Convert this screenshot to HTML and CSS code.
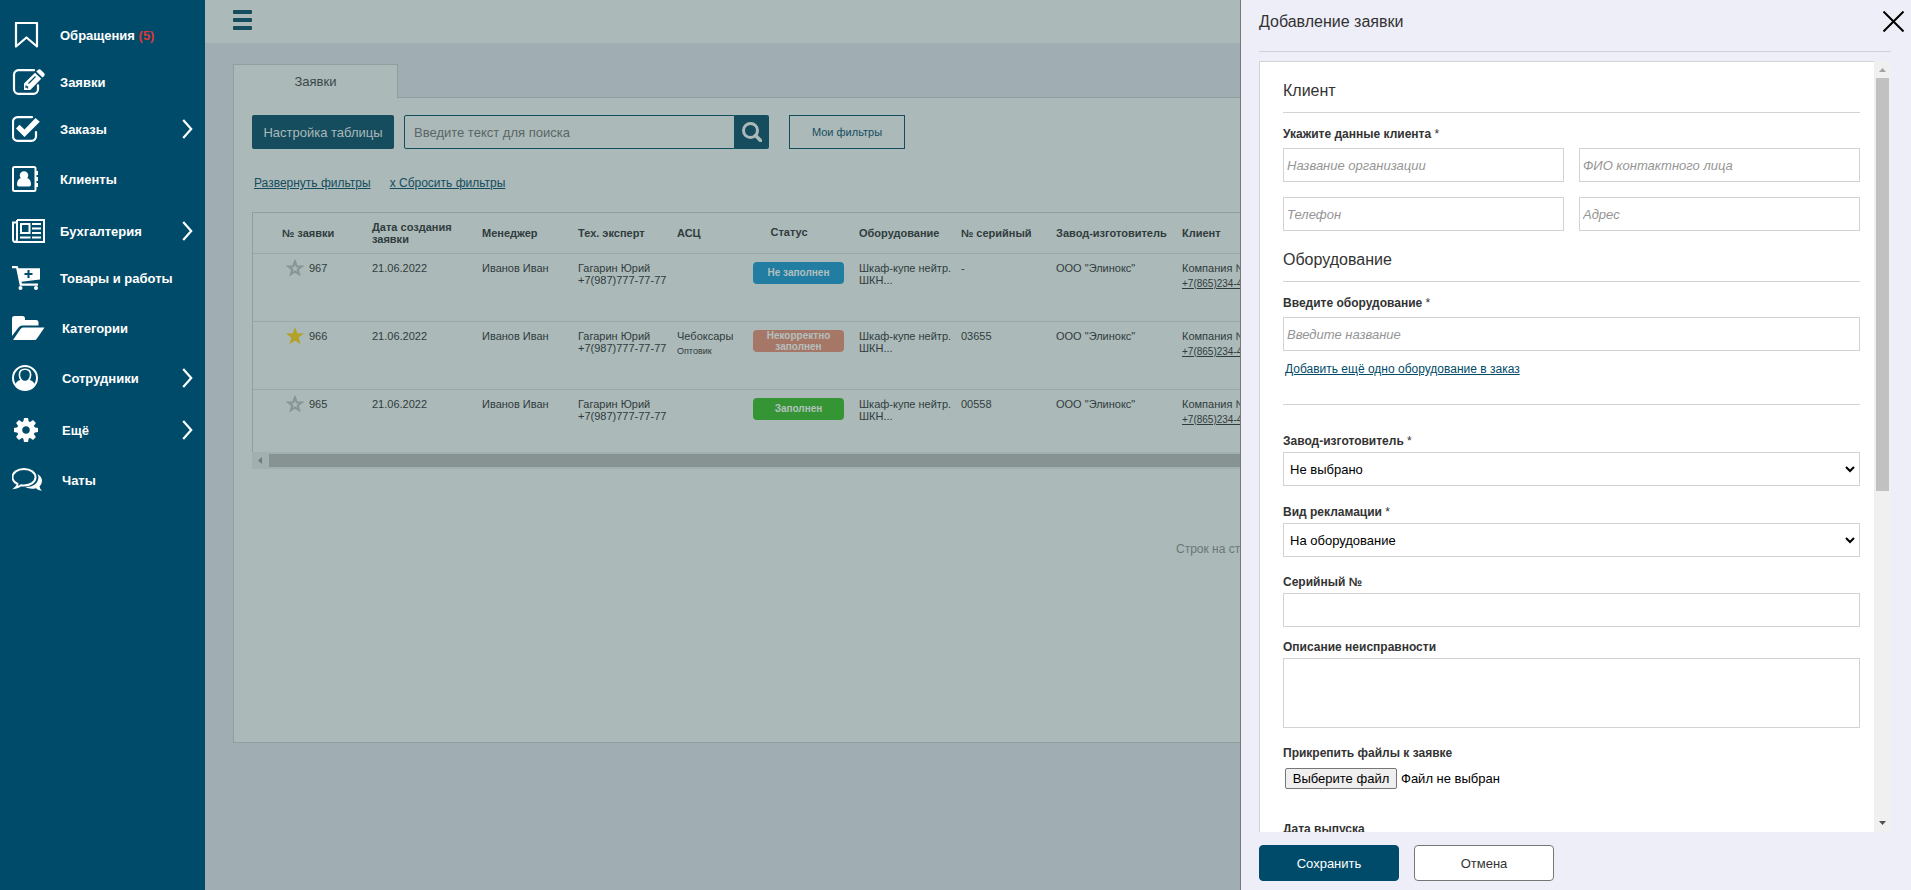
FILE: index.html
```html
<!DOCTYPE html>
<html lang="ru">
<head>
<meta charset="utf-8">
<title>Заявки</title>
<link rel="stylesheet" href="styles.css">
</head>
<body>
<div class="app">
  <nav class="sidebar">
    <a class="nav-item" href="#"><span class="nav-icon"><svg width="32" height="26" viewBox="0 0 32 26"><path d="M4 1h21v23.500L14.500 15.500 4 24.500z" fill="none" stroke="#fff" stroke-width="2.200" stroke-linejoin="round"/></svg></span>Обращения&nbsp;<span class="count">(5)</span></a>
    <a class="nav-item nav-item--tight" href="#"><span class="nav-icon"><svg width="34" height="26" viewBox="0 0 34 26"><path d="M22 1.200H6.500A4.500 4.500 0 0 0 2 5.700v14.600A4.500 4.500 0 0 0 6.500 24.800h15A4.500 4.500 0 0 0 26 20.300v-4" fill="none" stroke="#fff" stroke-width="2.200" stroke-linecap="round"/><path d="M12 21v-6.500L23 3.800l6.200 6L18.300 21zM24.300 2.500l1.800-1.700q1.300-1 2.600 0l3.500 3.500q1 1.300 0 2.600l-1.700 1.700z" fill="#fff"/><path d="M14 16.500v1.500h1.500v1.500M16.500 14.500l7-7" fill="none" stroke="#004b69" stroke-width="1.300"/></svg></span>Заявки</a>
    <a class="nav-item nav-item--tight" href="#"><span class="nav-icon"><svg width="32" height="26" viewBox="0 0 32 26"><path d="M20 1.200H5.500A4.500 4.500 0 0 0 1 5.700v14.600A4.500 4.500 0 0 0 5.500 24.800h14A4.500 4.500 0 0 0 24 20.300V16" fill="none" stroke="#fff" stroke-width="2.200" stroke-linecap="round"/><path d="M4 12.500l3.500-3.700 5 4.700L23.500 2l4.300 3.800L12.500 21z" fill="#fff"/></svg></span>Заказы<svg class="chevron" width="11" height="20" viewBox="0 0 11 20"><path d="M1.200 1l8 9-8 9" fill="none" stroke="#fff" stroke-width="2.200"/></svg></a>
    <a class="nav-item" href="#"><span class="nav-icon"><svg width="32" height="26" viewBox="0 0 32 26"><rect x="1" y="1" width="22.500" height="24" rx="1.500" fill="none" stroke="#fff" stroke-width="2"/><circle cx="12" cy="9.500" r="4.200" fill="#fff"/><path d="M5 18.500q0-5.500 4-6.500 3 2.500 6 0 4 1 4 6.500 0 2-2 2H7q-2 0-2-2zM24 5h2v4h-2zM24 11h2v4h-2zM24 17h2v4h-2z" fill="#fff"/></svg></span>Клиенты</a>
    <a class="nav-item nav-item--loose" href="#"><span class="nav-icon"><svg width="34" height="24" viewBox="0 0 34 24"><path d="M5 1h27v22H3Q1 23 1 20V3.500h3.500M5 1v19q0 3-2 3" fill="none" stroke="#fff" stroke-width="2"/><rect x="9" y="5" width="8.500" height="9" fill="none" stroke="#fff" stroke-width="2"/><path d="M20 5h9M20 9.500h9M20 14h9M8 18.500h10.500M20 18.500h9" stroke="#fff" stroke-width="2"/></svg></span>Бухгалтерия<svg class="chevron" width="11" height="20" viewBox="0 0 11 20"><path d="M1.200 1l8 9-8 9" fill="none" stroke="#fff" stroke-width="2.200"/></svg></a>
    <a class="nav-item nav-item--tight" href="#"><span class="nav-icon"><svg width="32" height="24" viewBox="0 0 32 24"><path d="M0 0h5.500l1 2.300H28V13.500L9.500 15.800l.4 1.700H26v2.200H7.800L4.200 2.300H0z" fill="#fff"/><circle cx="8.500" cy="22" r="2" fill="#fff"/><circle cx="24" cy="22" r="2" fill="#fff"/><path d="M16.500 4v8M12.500 8h8" stroke="#004b69" stroke-width="2"/></svg></span>Товары и работы</a>
    <a class="nav-item nav-item--wide" href="#"><span class="nav-icon"><svg width="34" height="24" viewBox="0 0 34 24"><path d="M0 20V2.500Q0 0 2.500 0h8Q13 0 13 2.500V4h11q2.500 0 2.500 2.500V9.500H10.500Q8 9.500 6.500 11.500z" fill="#fff"/><path d="M1 24l7.500-11Q9.500 11.500 11 11.500h21.500l-7.500 11Q24 24 22 24z" fill="#fff"/></svg></span>Категории</a>
    <a class="nav-item nav-item--wide" href="#"><span class="nav-icon"><svg width="32" height="26" viewBox="0 0 32 26"><circle cx="13" cy="13" r="12" fill="none" stroke="#fff" stroke-width="2"/><path d="M3 20q1-4 6-5.200 4 2.600 8 0 5 1.200 6 5.200-4 5-10 5T3 20z" fill="#fff"/><path d="M13 4.200c3.600 0 5.600 2.200 5.600 5.600 0 4-2.600 6.800-5.600 6.800s-5.600-2.800-5.600-6.800c0-3.400 2-5.600 5.600-5.600z" fill="#004b69" stroke="#fff" stroke-width="1.600"/></svg></span>Сотрудники<svg class="chevron" width="11" height="20" viewBox="0 0 11 20"><path d="M1.200 1l8 9-8 9" fill="none" stroke="#fff" stroke-width="2.200"/></svg></a>
    <a class="nav-item nav-item--wide nav-item--loose" href="#"><span class="nav-icon"><svg width="32" height="24" viewBox="-14 -12 32 24"><circle r="6.400" fill="none" stroke="#fff" stroke-width="5.200"/><g fill="#fff"><path id="tooth" d="M-2.800-8l.8-4h4l.8 4z"/><use href="#tooth" transform="rotate(45)"/><use href="#tooth" transform="rotate(90)"/><use href="#tooth" transform="rotate(135)"/><use href="#tooth" transform="rotate(180)"/><use href="#tooth" transform="rotate(225)"/><use href="#tooth" transform="rotate(270)"/><use href="#tooth" transform="rotate(315)"/></g></svg></span>Ещё<svg class="chevron" width="11" height="20" viewBox="0 0 11 20"><path d="M1.200 1l8 9-8 9" fill="none" stroke="#fff" stroke-width="2.200"/></svg></a>
    <a class="nav-item nav-item--wide" href="#"><span class="nav-icon"><svg width="32" height="24" viewBox="0 0 32 24"><path d="M25.500 6q4.500 2.500 4.500 7 0 3-2.500 5.500.3 2.500 2.500 4-3.500.5-6-2.200-6 1.500-11-1.300Q26 19 26.500 9z" fill="#fff"/><path d="M12 1c6.500 0 11.500 3.600 11.500 8.300S18.500 17.500 12 17.500q-1.500 0-3-.2-2.500 2-5.500 2.500 2-1.800 2-3.800Q.5 13.500.500 9.300C.5 4.600 5.500 1 12 1z" fill="#004b69" stroke="#fff" stroke-width="2"/></svg></span>Чаты</a>
  </nav>

  <main class="main">
    <header class="topbar">
      <button class="burger" type="button" aria-label="Меню"><span></span><span></span><span></span></button>
    </header>
    <section class="content">
      <div class="tab">Заявки</div>
      <div class="card">
        <div class="toolbar">
          <button class="btn-settings" type="button">Настройка таблицы</button>
          <div class="search">
            <input class="search-input" type="text" placeholder="Введите текст для поиска" aria-label="Поиск">
            <button class="search-btn" type="button" aria-label="Найти"><svg width="20" height="20" viewBox="0 0 20 20"><circle cx="8.500" cy="8.500" r="7" fill="none" stroke="#abb9b8" stroke-width="3"/><path d="M13.500 13.500l5 5" stroke="#abb9b8" stroke-width="3.500" stroke-linecap="round"/></svg></button>
          </div>
          <button class="btn-filters" type="button">Мои фильтры</button>
        </div>
        <div class="filter-links"><a href="#">Развернуть фильтры</a><a href="#">х Сбросить фильтры</a></div>
        <div class="table-wrap">
          <table class="orders">
            <colgroup><col class="c-num"><col class="c-date"><col class="c-manager"><col class="c-expert"><col class="c-asc"><col class="c-status"><col class="c-equip"><col class="c-serial"><col class="c-factory"><col></colgroup>
            <thead>
              <tr><th>№ заявки</th><th>Дата создания<br>заявки</th><th>Менеджер</th><th>Тех. эксперт</th><th>АСЦ</th><th class="th-status">Статус</th><th>Оборудование</th><th>№ серийный</th><th>Завод-изготовитель</th><th>Клиент</th></tr>
            </thead>
            <tbody>
              <tr>
                <td><span class="num"><svg width="18" height="18" viewBox="0 0 18 18"><path d="M9 2.500l1.700 4.700 5 .2-4 3 1.400 4.800L9 12.400l-4.100 2.800 1.400-4.800-4-3 5-.2z" fill="none" stroke="#879594" stroke-width="2"/></svg>967</span></td>
                <td>21.06.2022</td><td>Иванов Иван</td><td>Гагарин Юрий<br>+7(987)777-77-77</td><td></td>
                <td><span class="badge badge--blue">Не заполнен</span></td>
                <td>Шкаф-купе нейтр.<br>ШКН...</td><td>-</td><td>ООО "Элинокс"</td><td>Компания №1<a class="phone" href="#">+7(865)234-44-44</a></td>
              </tr>
              <tr>
                <td><span class="num"><svg width="18" height="18" viewBox="0 0 18 18"><path d="M9 0l2.200 6.300 6.800.2-5.400 4.100 1.900 6.600L9 13.400l-5.500 3.800 1.900-6.600L0 6.500l6.800-.2z" fill="#b3a128"/></svg>966</span></td>
                <td>21.06.2022</td><td>Иванов Иван</td><td>Гагарин Юрий<br>+7(987)777-77-77</td><td>Чебоксары<span class="note">Оптовик</span></td>
                <td><span class="badge badge--red">Некорректно<br>заполнен</span></td>
                <td>Шкаф-купе нейтр.<br>ШКН...</td><td>03655</td><td>ООО "Элинокс"</td><td>Компания №1<a class="phone" href="#">+7(865)234-44-44</a></td>
              </tr>
              <tr>
                <td><span class="num"><svg width="18" height="18" viewBox="0 0 18 18"><path d="M9 2.500l1.700 4.700 5 .2-4 3 1.400 4.800L9 12.400l-4.100 2.800 1.400-4.800-4-3 5-.2z" fill="none" stroke="#879594" stroke-width="2"/></svg>965</span></td>
                <td>21.06.2022</td><td>Иванов Иван</td><td>Гагарин Юрий<br>+7(987)777-77-77</td><td></td>
                <td><span class="badge badge--green">Заполнен</span></td>
                <td>Шкаф-купе нейтр.<br>ШКН...</td><td>00558</td><td>ООО "Элинокс"</td><td>Компания №1<a class="phone" href="#">+7(865)234-44-44</a></td>
              </tr>
            </tbody>
          </table>
        </div>
        <div class="hscroll"><svg width="17" height="17" viewBox="0 0 17 17"><path d="M10 5v7L6 8.500z" fill="#6f7d7d"/></svg><span class="hthumb"></span></div>
        <div class="pager">Строк на странице</div>
      </div>
    </section>
  </main>

  <aside class="drawer">
    <header class="drawer-head">
      <h1 class="drawer-title">Добавление заявки</h1>
      <button class="close" type="button" aria-label="Закрыть"><svg width="21" height="21" viewBox="0 0 21 21"><path d="M.5.500l20 20M20.500.500l-20 20" stroke="#000" stroke-width="2"/></svg></button>
    </header>
    <div class="drawer-body">
      <form class="form" id="request">
        <h2 class="group-title">Клиент</h2>
        <label class="label label--first" for="org">Укажите данные клиента <span class="req">*</span></label>
        <div class="pair">
          <input class="field" id="org" type="text" placeholder="Название организации">
          <input class="field" type="text" placeholder="ФИО контактного лица" aria-label="ФИО контактного лица">
          <input class="field" type="text" placeholder="Телефон" aria-label="Телефон">
          <input class="field" type="text" placeholder="Адрес" aria-label="Адрес">
        </div>
        <h2 class="group-title group-title--next">Оборудование</h2>
        <label class="label label--first" for="equip">Введите оборудование <span class="req">*</span></label>
        <input class="field" id="equip" type="text" placeholder="Введите название">
        <a class="add-link" href="#">Добавить ещё одно оборудование в заказ</a>
        <hr class="rule">
        <label class="label label--far" for="factory">Завод-изготовитель <span class="req">*</span></label>
        <div class="select-wrap"><select class="field select" id="factory"><option>Не выбрано</option></select><svg class="caret" width="10" height="7" viewBox="0 0 10 7"><path d="M1 1l4 4 4-4" fill="none" stroke="#000" stroke-width="2"/></svg></div>
        <label class="label" for="kind">Вид рекламации <span class="req">*</span></label>
        <div class="select-wrap"><select class="field select" id="kind"><option>На оборудование</option></select><svg class="caret" width="10" height="7" viewBox="0 0 10 7"><path d="M1 1l4 4 4-4" fill="none" stroke="#000" stroke-width="2"/></svg></div>
        <label class="label label--mid" for="serial">Серийный №</label>
        <input class="field" id="serial" type="text">
        <label class="label label--near" for="descr">Описание неисправности</label>
        <textarea class="field area" id="descr"></textarea>
        <label class="label label--mid" for="file">Прикрепить файлы к заявке</label>
        <div class="file"><input class="file-input" id="file" type="file"><label class="file-btn" for="file">Выберите файл</label><span>Файл не выбран</span></div>
        <label class="label label--far" for="made">Дата выпуска</label>
        <input class="field" id="made" type="text">
      </form>
      <div class="vscroll"><svg width="17" height="17" viewBox="0 0 17 17"><path d="M5 11h7L8.500 7z" fill="#a3a3a3"/></svg><div class="vtrack"><div class="vthumb"></div></div><svg width="17" height="17" viewBox="0 0 17 17"><path d="M5 6h7l-3.500 4z" fill="#505050"/></svg></div>
    </div>
    <footer class="drawer-foot">
      <button class="btn btn--primary" type="submit" form="request">Сохранить</button>
      <button class="btn" type="button">Отмена</button>
    </footer>
  </aside>
</div>
</body>
</html>
```

FILE: styles.css
```css
* { box-sizing: border-box; }
body { margin: 0; font-family: "Liberation Sans", Arial, sans-serif; color: #333; }
button, input, select, textarea { font-family: inherit; }
svg { display: block; flex: none; }

.app { display: flex; height: 100vh; position: relative; overflow: hidden; }

/* Sidebar */
.sidebar { flex: none; width: 205px; padding-top: 7px; background: #004b69; }
.nav-item { display: flex; align-items: center; height: 44px; margin-top: 6px; padding: 0 12px; color: #fff; font-size: 13px; font-weight: bold; text-decoration: none; white-space: nowrap; }
.nav-item--tight { margin-top: 3px; }
.nav-item--loose { margin-top: 8px; }
.nav-icon { flex: none; width: 48px; }
.nav-item--wide .nav-icon { width: 50px; }
.count { color: #d83a3a; }
.chevron { margin-left: auto; }

/* Main area, dimmed behind the drawer */
.main { flex: 1; min-width: 0; background: #a0adb2; }
.topbar { height: 43px; padding: 10px 28px; background: #abb9b8; }
.burger { display: flex; flex-direction: column; gap: 4px; width: 19px; padding: 0; border: 0; background: none; }
.burger span { width: 19px; height: 4px; border-radius: 1px; background: #154d5f; }
.content { padding: 21px 28px; }
.tab { position: relative; z-index: 1; width: 165px; height: 34px; margin-bottom: -1px; border: 1px solid #8f9e9e; border-bottom: 0; background: #abb9b8; color: #3c4848; font-size: 13px; line-height: 34px; text-align: center; }
.card { min-height: 646px; padding: 17px 18px; border: 1px solid #8f9e9e; background: #abb9b8; }
.toolbar { display: flex; }
.btn-settings { width: 142px; height: 34px; padding: 0; border: 0; border-radius: 2px; background: #154d5f; color: #abb9b8; font-size: 13px; }
.search { display: flex; width: 365px; margin: 0 20px 0 10px; }
.search-input { flex: 1; min-width: 0; height: 34px; padding: 0 9px; border: 1px solid #154d5f; border-radius: 2px 0 0 2px; background: transparent; font-size: 13px; }
.search-input::placeholder { color: #596667; }
.search-btn { display: flex; align-items: center; justify-content: center; width: 34px; padding: 0; border: 0; border-radius: 0 2px 2px 0; background: #154d5f; }
.btn-filters { width: 116px; height: 34px; border: 1px solid #154d5f; background: transparent; color: #154d5f; font-size: 11px; }
.filter-links { display: flex; gap: 19px; margin: 26px 2px 21px; font-size: 12px; line-height: 16px; }
.filter-links a { color: #154d5f; }

.table-wrap { border: 1px solid #8f9e9e; border-width: 1px 0 0 1px; }
.orders { width: 100%; table-layout: fixed; border-collapse: collapse; color: #303c3d; font-size: 11px; line-height: 12px; }
.orders th { height: 40px; padding: 0; text-align: left; white-space: nowrap; }
.orders td { height: 68px; padding: 8px 0 0; border-top: 1px solid #98a6a6; vertical-align: top; white-space: nowrap; }
.orders tbody tr:last-child td { height: 63px; }
.orders th:first-child { padding-left: 29px; }
.orders td:first-child { padding-left: 33px; }
.orders .th-status { padding-right: 34px; padding-bottom: 2px; text-align: center; }
.c-num { width: 119px; }
.c-date { width: 110px; }
.c-manager { width: 96px; }
.c-expert { width: 99px; }
.c-asc { width: 76px; }
.c-status { width: 106px; }
.c-equip { width: 102px; }
.c-serial { width: 95px; }
.c-factory { width: 126px; }
.num { display: flex; gap: 5px; height: 12px; align-items: center; }
.badge { display: flex; align-items: center; justify-content: center; width: 91px; height: 22px; border-radius: 4px; color: #b4c0bf; font-size: 10px; font-weight: bold; line-height: 11px; text-align: center; }
.badge--blue { background: #217da1; }
.badge--red { background: #a67767; }
.badge--green { background: #359434; }
.note, .phone { display: block; margin-top: 4px; font-size: 9px; line-height: 11px; color: inherit; }
.phone { font-size: 10px; }
.hscroll { display: flex; align-items: center; height: 17px; background: #a2b0af; }
.hthumb { flex: 1; height: 13px; background: #869392; }
.pager { margin-top: 72px; padding-left: 924px; color: #6b7777; font-size: 12px; line-height: 16px; white-space: nowrap; }

/* Drawer */
.drawer { position: absolute; top: 0; right: 0; bottom: 0; display: flex; flex-direction: column; width: 671px; padding: 0 20px 0 18px; border-left: 1px solid #777; background: #eeeef8; }
.drawer-head { display: flex; align-items: center; justify-content: space-between; flex: none; height: 52px; padding-bottom: 8px; border-bottom: 1px solid #d0d0d6; }
.drawer-title { margin: 0; font-size: 16px; font-weight: normal; line-height: 20px; }
.close { margin-right: -13px; padding: 0; border: 0; background: none; }
.drawer-body { display: flex; flex: 1; min-height: 0; margin-top: 9px; }
.form { flex: 1; min-width: 0; padding: 19px 14px 0 23px; overflow: hidden; border: 1px solid #d3d3d8; border-width: 1px 0 0 1px; background: #fff; }
.group-title { margin: 0; padding-bottom: 11px; border-bottom: 1px solid #d3d3d3; font-size: 16px; font-weight: normal; line-height: 20px; }
.group-title--next { margin-top: 19px; }
.label { display: block; margin: 19px 0 4px; font-size: 12px; font-weight: bold; line-height: 14px; }
.label--first { margin: 14px 0 7px; }
.label--near { margin-top: 13px; }
.label--mid { margin-top: 18px; }
.label--far { margin-top: 29px; }
.req { font-weight: normal; }
.pair { display: grid; grid-template-columns: 1fr 1fr; gap: 15px; }
.field { display: block; width: 100%; height: 34px; padding: 0 3px; border: 1px solid #d3d3d3; border-radius: 0; background: #fff; font-size: 13px; }
.field::placeholder { color: #959595; font-style: italic; }
.select-wrap { position: relative; }
.select { padding: 0 6px; appearance: none; color: #000; }
.caret { position: absolute; right: 5px; top: 14px; pointer-events: none; }
.area { height: 70px; resize: none; }
.add-link { display: block; margin: 11px 2px 0; color: #004b69; font-size: 12px; line-height: 14px; }
.rule { height: 1px; margin: 28px 0 0; border: 0; background: #d3d3d3; }
.file { position: relative; display: flex; align-items: center; gap: 4px; margin: 8px 2px 0; padding-bottom: 4px; color: #000; font-size: 13px; }
.file-input { position: absolute; width: 1px; height: 1px; opacity: 0; }
.file-btn { width: 112px; height: 21px; border: 1px solid #767676; border-radius: 2px; background: #efefef; line-height: 19px; text-align: center; }
.vscroll { display: flex; flex-direction: column; width: 17px; background: #f0f0f0; }
.vtrack { flex: 1; padding: 0 2px; }
.vthumb { height: 56%; background: #c1c1c1; }
.drawer-foot { display: flex; flex: none; gap: 15px; padding: 13px 0 9px; }
.btn { width: 140px; height: 36px; border: 1px solid #767676; border-radius: 4px; background: #fff; color: #333; font-size: 13px; }
.btn--primary { border-color: #004b69; background: #004b69; color: #fff; }
```
